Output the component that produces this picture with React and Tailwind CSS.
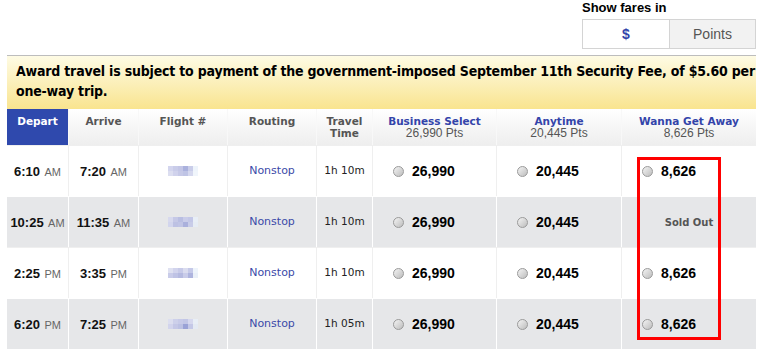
const rows = [
  {
    depart: ["6:10", "AM"],
    arrive: ["7:20", "AM"],
    time: "1h 10m",
    bs: "26,990",
    any: "20,445",
    wga: "8,626",
    alt: false,
    blur: [
      ["#d3d5ee", "#c9cce9", "#c3c6e6", "#aab1dd", "#c9cde9", "#eef4fb"],
      ["#dcdef0", "#d0d2ec", "#c6c9e7", "#bfc4e5", "#d5d8ee", "#f0f5fb"],
    ],
  },
  {
    depart: ["10:25", "AM"],
    arrive: ["11:35", "AM"],
    time: "1h 10m",
    bs: "26,990",
    any: "20,445",
    wga: null,
    alt: true,
    blur: [
      ["#d7d9ee", "#c5c8e6", "#b9bee2", "#c9cce9", "#c3c7e7", "#e8eef6"],
      ["#d2d5ed", "#bdc1e3", "#c0c4e5", "#aab0dc", "#c8cce8", "#e6ecf4"],
    ],
  },
  {
    depart: ["2:25", "PM"],
    arrive: ["3:35", "PM"],
    time: "1h 10m",
    bs: "26,990",
    any: "20,445",
    wga: "8,626",
    alt: false,
    blur: [
      ["#dfe1f1", "#d2d4ed", "#c7cae8", "#dadcef", "#c5c9e8", "#eef4fb"],
      ["#c9cce9", "#bfc3e5", "#b5bae0", "#c9cce9", "#aeb4de", "#eaf0f8"],
    ],
  },
  {
    depart: ["6:20", "PM"],
    arrive: ["7:25", "PM"],
    time: "1h 05m",
    bs: "26,990",
    any: "20,445",
    wga: "8,626",
    alt: true,
    blur: [
      ["#dcdeef", "#cdd0ea", "#c7cae8", "#c2c6e6", "#d6d8ee", "#e8eef6"],
      ["#d2d4ec", "#c4c7e6", "#bcc1e3", "#9aa2d6", "#c4c8e7", "#e4eaf3"],
    ],
  },
];

const grid =
  "grid grid-cols-[62px_70px_89px_89px_56px_124px_125px_134px]";

function Radio() {
  return (
    <span className="inline-block w-[11px] h-[11px] rounded-full border border-[#9a9a9a] bg-gradient-to-br from-[#f4f4f4] to-[#bdbdbd] shrink-0" />
  );
}

function Price({ value }) {
  return (
    <div className="flex items-center gap-[8px] pl-[20px]">
      <Radio />
      <span className="text-[14px] font-bold text-black font-['Liberation_Sans',Arial,sans-serif]">
        {value}
      </span>
    </div>
  );
}

function Clock({ t }) {
  return (
    <span className="font-['Liberation_Sans',Arial,sans-serif]">
      <span className="text-[13px] font-bold text-[#111]">{t[0]}</span>{" "}
      <span className="text-[11px] text-[#666]">{t[1]}</span>
    </span>
  );
}

function HeadCell({ children, className = "" }) {
  return (
    <div
      className={
        "border-r border-[#f8f8f8] pt-[6px] text-center text-[10.5px] leading-[12px] font-bold font-['DejaVu_Sans',Verdana,sans-serif] " +
        className
      }
    >
      {children}
    </div>
  );
}

export default function App() {
  return (
    <main className="w-[762px] h-[356px] bg-white overflow-hidden font-['Liberation_Sans',Arial,sans-serif]">
      <div className="flex justify-end pr-[6px]">
        <div className="w-[174px]">
          <p className="text-[13px] leading-[16px] font-bold text-black">
            Show fares in
          </p>
          <div className="mt-[3px] flex h-[30px] border border-[#d4d4d4]">
            <button className="w-[87px] text-[14px] font-bold text-[#3344aa] bg-white border-r border-[#d4d4d4]">
              $
            </button>
            <button className="flex-1 text-[14px] text-[#555] bg-[#f2f2f2]">
              Points
            </button>
          </div>
        </div>
      </div>

      <div className="ml-[7px] w-[749px] mt-[6px] border-t border-[#bdbdbd]">
        <div className="h-[53px] pl-[9px] pt-[5px] bg-gradient-to-b from-[#fefbe4] to-[#f9e48e]">
          <p className="text-[14px] leading-[20px] tracking-[-0.2px] font-bold text-black font-['DejaVu_Sans_Condensed','DejaVu_Sans',Tahoma,sans-serif]">
            Award travel is subject to payment of the government-imposed
            September 11th Security Fee, of $5.60 per one-way trip.
          </p>
        </div>

        <div className="relative">
          <div
            className={
              grid +
              " h-[36px] bg-gradient-to-b from-white to-[#eeeeee] text-[#555]"
            }
          >
            <HeadCell className="bg-[#2f49ad] text-white">Depart</HeadCell>
            <HeadCell>Arrive</HeadCell>
            <HeadCell>Flight #</HeadCell>
            <HeadCell>Routing</HeadCell>
            <HeadCell>
              Travel
              <br />
              Time
            </HeadCell>
            <HeadCell>
              <span className="text-[#3344aa]">Business Select</span>
              <br />
              <span className="font-normal text-[12px] font-['Liberation_Sans',Arial,sans-serif]">
                26,990 Pts
              </span>
            </HeadCell>
            <HeadCell>
              <span className="text-[#3344aa]">Anytime</span>
              <br />
              <span className="font-normal text-[12px] font-['Liberation_Sans',Arial,sans-serif]">
                20,445 Pts
              </span>
            </HeadCell>
            <HeadCell className="border-r-0">
              <span className="text-[#3344aa]">Wanna Get Away</span>
              <br />
              <span className="font-normal text-[12px] font-['Liberation_Sans',Arial,sans-serif]">
                8,626 Pts
              </span>
            </HeadCell>
          </div>

          {rows.map((r, i) => {
            const line = r.alt ? "border-white" : "border-[#efefef]";
            const cell = "flex items-center border-r " + line;
            return (
              <div
                key={i}
                className={
                  grid +
                  " h-[51px] border-t " +
                  line +
                  (r.alt ? " bg-[#e6e7e9]" : " bg-white")
                }
              >
                <div className={cell + " justify-center"}>
                  <Clock t={r.depart} />
                </div>
                <div className={cell + " justify-center"}>
                  <Clock t={r.arrive} />
                </div>
                <div className={cell + " justify-center"}>
                  <div className="flex flex-col">
                    {r.blur.map((b, j) => (
                      <div key={j} className="flex">
                        {b.map((c, k) => (
                          <span
                            key={k}
                            className="w-[5px] h-[5px]"
                            style={{ backgroundColor: c }}
                          />
                        ))}
                      </div>
                    ))}
                  </div>
                </div>
                <div className={cell + " justify-center"}>
                  <span className="text-[11px] text-[#3b4aa8] font-['DejaVu_Sans',Verdana,sans-serif]">
                    Nonstop
                  </span>
                </div>
                <div className={cell + " justify-center"}>
                  <span className="text-[10.5px] text-[#222] font-['DejaVu_Sans',Verdana,sans-serif]">
                    {r.time}
                  </span>
                </div>
                <div className={cell}>
                  <Price value={r.bs} />
                </div>
                <div className={cell}>
                  <Price value={r.any} />
                </div>
                <div className="flex items-center">
                  {r.wga ? (
                    <Price value={r.wga} />
                  ) : (
                    <span className="w-full text-center text-[10px] font-bold text-[#555] font-['DejaVu_Sans',Verdana,sans-serif]">
                      Sold Out
                    </span>
                  )}
                </div>
              </div>
            );
          })}

          <div className="absolute left-[630px] top-[48px] w-[84px] h-[183px] border-[3px] border-[#ff0000] pointer-events-none" />
        </div>
      </div>
    </main>
  );
}
